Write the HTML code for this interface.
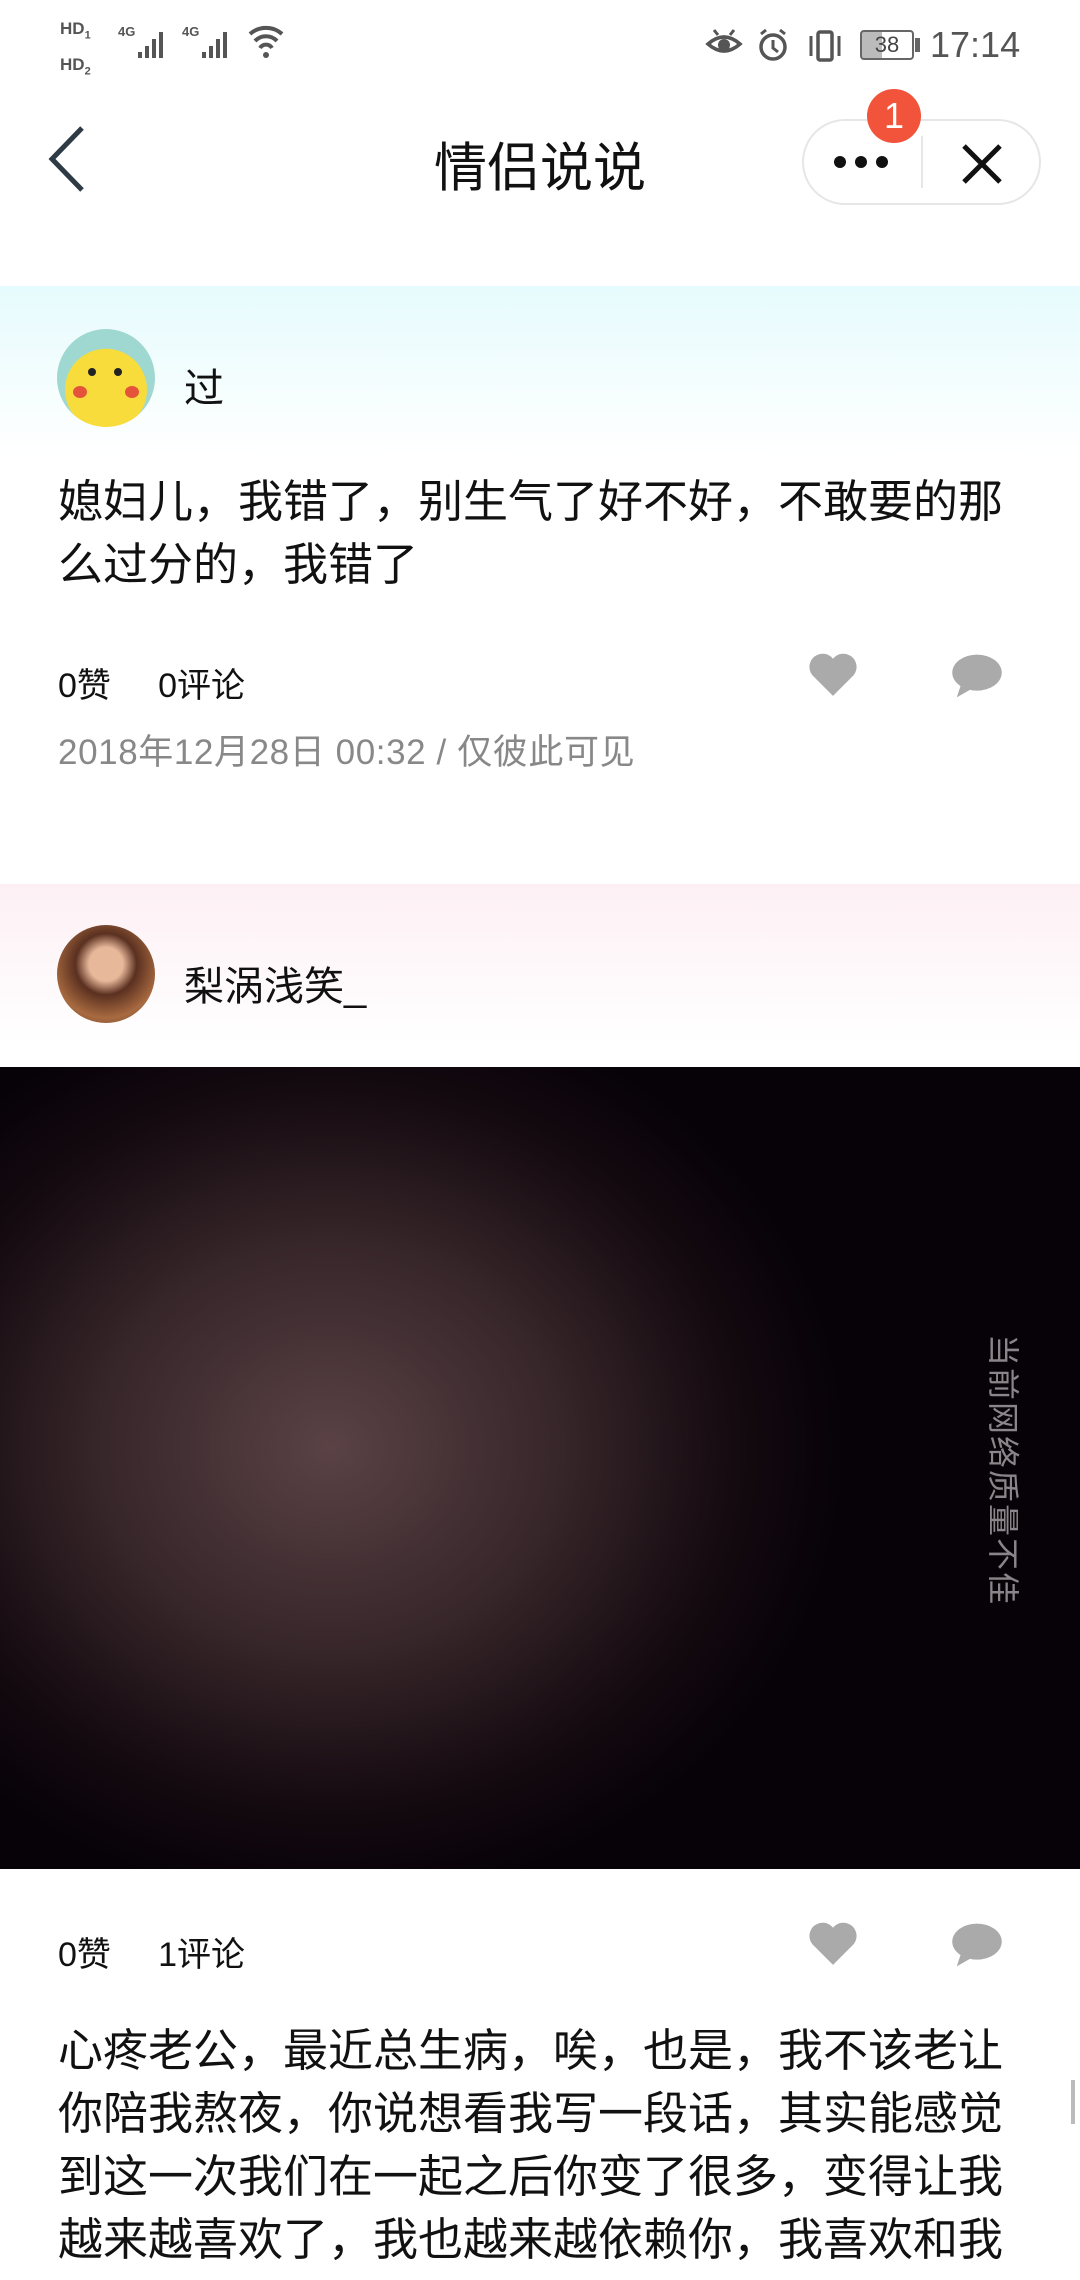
<!DOCTYPE html>
<html><head><meta charset="utf-8"><style>
*{margin:0;padding:0;box-sizing:border-box}
body{width:1080px;height:2280px;overflow:hidden;background:#fff;font-family:"Liberation Sans","Noto Sans CJK SC",sans-serif;position:relative;color:#111}
.abs{position:absolute}
.sb{color:#555;font-size:34px}
.title{left:0;width:1080px;text-align:center;top:126px;font-size:53px;color:#111}
.cap{left:802px;top:119px;width:239px;height:86px;border:2px solid #e6e6e6;border-radius:43px;background:#fff}
.badge{left:867px;top:89px;width:54px;height:54px;border-radius:50%;background:#f2533b;color:#fff;font-size:36px;text-align:center;line-height:54px}
.sec1{left:0;top:286px;width:1080px;height:170px;background:linear-gradient(#e6fbfd,#fff)}
.sec2{left:0;top:884px;width:1080px;height:160px;background:linear-gradient(#fdf0f5,#fff)}
.av{width:98px;height:98px;border-radius:50%}
.name{font-size:40px;color:#111}
.txt{left:58px;width:960px;font-size:45px;line-height:63px;color:#111}
.meta{font-size:34px;color:#111}
.date{font-size:35px;color:#888;letter-spacing:0.6px}
</style></head><body>
<div class="abs sb" style="left:60px;top:14px;font-size:17px;font-weight:bold;line-height:30px;color:#555">HD<sub style="font-size:11px">1</sub><br>HD<sub style="font-size:11px">2</sub></div>
<svg class="abs" style="left:118px;top:22px" width="175" height="40" viewBox="0 0 175 40">
<text x="0" y="14" font-size="13" fill="#555" font-family="Liberation Sans" font-weight="bold">4G</text>
<rect x="20" y="30" width="4" height="6" fill="#555"/><rect x="27" y="24" width="4" height="12" fill="#555"/><rect x="34" y="17" width="4" height="19" fill="#555"/><rect x="41" y="10" width="4" height="26" fill="#555"/>
<text x="64" y="14" font-size="13" fill="#555" font-family="Liberation Sans" font-weight="bold">4G</text>
<rect x="84" y="30" width="4" height="6" fill="#555"/><rect x="91" y="24" width="4" height="12" fill="#555"/><rect x="98" y="17" width="4" height="19" fill="#555"/><rect x="105" y="10" width="4" height="26" fill="#555"/>
<path d="M132 12 A24 24 0 0 1 164 12 M137 19 A15 15 0 0 1 159 19 M142 26 A7 7 0 0 1 154 26" stroke="#555" stroke-width="4" fill="none"/><circle cx="148" cy="33" r="3" fill="#555"/></svg>
<svg class="abs" style="left:704px;top:26px" width="140" height="40" viewBox="0 0 140 40"><path d="M4 18 Q20 4 36 18 Q20 32 4 18Z" fill="none" stroke="#555" stroke-width="3.5"/><circle cx="20" cy="19" r="6" fill="#555"/><path d="M10 4l4 5M30 4l-4 5" stroke="#555" stroke-width="3"/><circle cx="69" cy="21" r="12" fill="none" stroke="#555" stroke-width="3.5"/><path d="M69 14v8l5 4M57 8l5-4M81 8l-5-4" stroke="#555" stroke-width="3" fill="none"/><rect x="114" y="6" width="14" height="28" rx="2" fill="none" stroke="#555" stroke-width="3.5"/><path d="M107 10v20M135 10v20" stroke="#555" stroke-width="3"/></svg>
<div class="abs" style="left:860px;top:30px;width:54px;height:30px;border:2px solid #666;border-radius:4px;font-size:22px;line-height:26px;color:#444;text-align:center;background:linear-gradient(90deg,#bbb 40%,#fff 40%)">38</div>
<div class="abs" style="left:915px;top:38px;width:5px;height:14px;background:#666"></div>
<div class="abs sb" style="left:930px;top:24px;font-size:36px;color:#555">17:14</div>
<svg class="abs" style="left:44px;top:124px" width="44" height="70" viewBox="0 0 44 70"><path d="M38 4 L8 35 L38 66" stroke="#2e3a44" stroke-width="5" fill="none"/></svg>
<div class="abs title">情侣说说</div>
<div class="abs cap"></div>
<div class="abs" style="left:921px;top:136px;width:2px;height:52px;background:#e6e6e6"></div>
<svg class="abs" style="left:832px;top:152px" width="60" height="20"><circle cx="8" cy="10" r="6" fill="#111"/><circle cx="29" cy="10" r="6" fill="#111"/><circle cx="50" cy="10" r="6" fill="#111"/></svg>
<svg class="abs" style="left:960px;top:142px" width="44" height="44"><path d="M4 4L40 40M40 4L4 40" stroke="#111" stroke-width="5"/></svg>
<div class="abs badge">1</div>

<div class="abs sec1"></div>
<div class="abs av" style="left:57px;top:329px;background:radial-gradient(circle at 50% 62%,#f7dc3c 52%,#9fd8d0 53%)"></div>
<div class="abs" style="left:73px;top:386px;width:14px;height:12px;border-radius:50%;background:#e5533a"></div>
<div class="abs" style="left:125px;top:386px;width:14px;height:12px;border-radius:50%;background:#e5533a"></div>
<div class="abs" style="left:88px;top:368px;width:8px;height:8px;border-radius:50%;background:#222"></div>
<div class="abs" style="left:114px;top:368px;width:8px;height:8px;border-radius:50%;background:#222"></div>
<div class="abs name" style="left:184px;top:356px">过</div>
<div class="abs txt" style="top:470px">媳妇儿，我错了，别生气了好不好，不敢要的那么过分的，我错了</div>
<div class="abs meta" style="left:58px;top:658px">0赞&nbsp;&nbsp;&nbsp;&nbsp;&nbsp;0评论</div>
<svg class="abs" style="left:806px;top:650px" width="54" height="48" viewBox="0 0 24 22"><path d="M12 21L2.5 11.5A5.5 5.5 0 0 1 12 4A5.5 5.5 0 0 1 21.5 11.5Z" fill="#aaa"/></svg>
<svg class="abs" style="left:950px;top:652px" width="54" height="48" viewBox="0 0 24 21"><ellipse cx="12" cy="9" rx="11" ry="8" fill="#aaa"/><path d="M5 14L3 20L10 16Z" fill="#aaa"/></svg>
<div class="abs date" style="left:58px;top:724px">2018年12月28日 00:32 / 仅彼此可见</div>

<div class="abs sec2"></div>
<div class="abs av" style="left:57px;top:925px;background:radial-gradient(circle at 50% 40%,#e8b89a 22%,#5a3020 40%,#a86a40 70%,#6b4228)"></div>
<div class="abs name" style="left:184px;top:954px">梨涡浅笑_</div>

<div class="abs" style="left:0;top:1067px;width:1080px;height:802px;background:radial-gradient(ellipse 520px 460px at 330px 380px,#5a4245,#362529 45%,#140a10 78%,#060208)"></div>
<div class="abs" style="left:838px;top:1450px;width:330px;height:40px;font-size:32px;line-height:40px;color:#8a8588;text-align:center;transform:rotate(90deg);letter-spacing:2px;white-space:nowrap">当前网络质量不佳</div>

<div class="abs meta" style="left:58px;top:1927px">0赞&nbsp;&nbsp;&nbsp;&nbsp;&nbsp;1评论</div>
<svg class="abs" style="left:806px;top:1919px" width="54" height="48" viewBox="0 0 24 22"><path d="M12 21L2.5 11.5A5.5 5.5 0 0 1 12 4A5.5 5.5 0 0 1 21.5 11.5Z" fill="#aaa"/></svg>
<svg class="abs" style="left:950px;top:1921px" width="54" height="48" viewBox="0 0 24 21"><ellipse cx="12" cy="9" rx="11" ry="8" fill="#aaa"/><path d="M5 14L3 20L10 16Z" fill="#aaa"/></svg>
<div class="abs txt" style="top:2019px">心疼老公，最近总生病，唉，也是，我不该老让你陪我熬夜，你说想看我写一段话，其实能感觉到这一次我们在一起之后你变了很多，变得让我越来越喜欢了，我也越来越依赖你，我喜欢和我</div>
<div class="abs" style="left:1071px;top:2080px;width:4px;height:44px;background:#bbb"></div>
</body></html>
